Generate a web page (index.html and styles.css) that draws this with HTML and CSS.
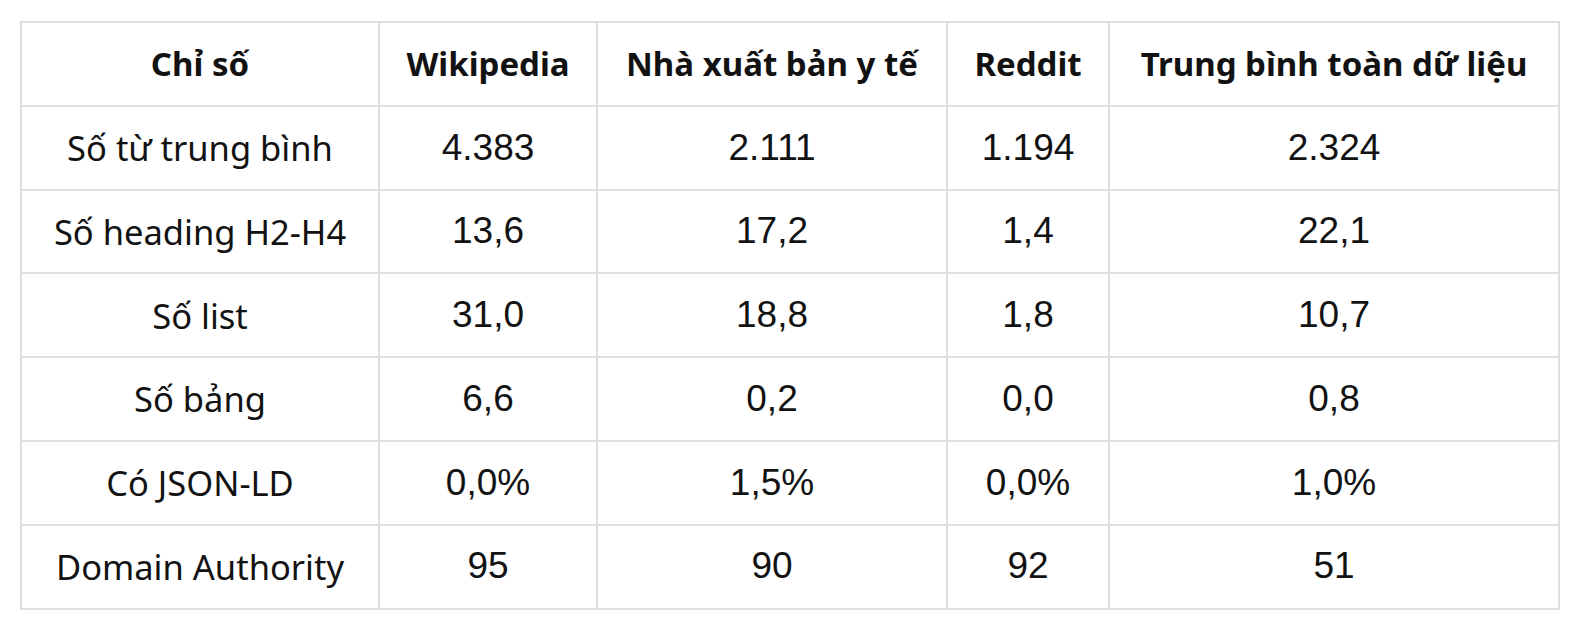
FILE: index.html
```html
<!DOCTYPE html>
<html lang="vi">
<head>
<meta charset="utf-8">
<link rel="stylesheet" href="styles.css">
</head>
<body>
<table class="stats">
  <colgroup>
    <col class="c1"><col class="c2"><col class="c3"><col class="c4"><col class="c5">
  </colgroup>
  <thead>
    <tr><th>Chỉ số</th><th>Wikipedia</th><th>Nhà xuất bản y tế</th><th>Reddit</th><th>Trung bình toàn dữ liệu</th></tr>
  </thead>
  <tbody>
    <tr><td class="label">Số từ trung bình</td><td>4.383</td><td>2.111</td><td>1.194</td><td>2.324</td></tr>
    <tr><td class="label">Số heading H2-H4</td><td>13,6</td><td>17,2</td><td>1,4</td><td>22,1</td></tr>
    <tr><td class="label">Số list</td><td>31,0</td><td>18,8</td><td>1,8</td><td>10,7</td></tr>
    <tr><td class="label">Số bảng</td><td>6,6</td><td>0,2</td><td>0,0</td><td>0,8</td></tr>
    <tr><td class="label">Có JSON-LD</td><td>0,0%</td><td>1,5%</td><td>0,0%</td><td>1,0%</td></tr>
    <tr><td class="label">Domain Authority</td><td>95</td><td>90</td><td>92</td><td>51</td></tr>
  </tbody>
</table>
</body>
</html>
```

FILE: styles.css
```css
html, body {
  margin: 0;
  background: #ffffff;
}
body {
  padding: 21px 0 0 20px;
}
.stats {
  border-collapse: collapse;
  width: 1538px;
  table-layout: fixed;
  color: #121212;
}
.c1 { width: 358px; }
.c2 { width: 218px; }
.c3 { width: 350px; }
.c4 { width: 162px; }
.c5 { width: 450px; }
.stats th, .stats td {
  border: 2px solid #dfdfdf;
  height: 83.8px;
  padding: 0 4px;
  text-align: center;
  vertical-align: middle;
  box-sizing: border-box;
  line-height: 1.2;
  white-space: nowrap;
}
.stats th {
  font-family: "Noto Sans", sans-serif;
  font-weight: 700;
  font-size: 33px;
}
.stats td {
  font-family: "Liberation Sans", Arial, sans-serif;
  font-size: 37px;
}
.stats td.label {
  font-family: "Noto Sans", sans-serif;
  font-size: 34.5px;
}
```
